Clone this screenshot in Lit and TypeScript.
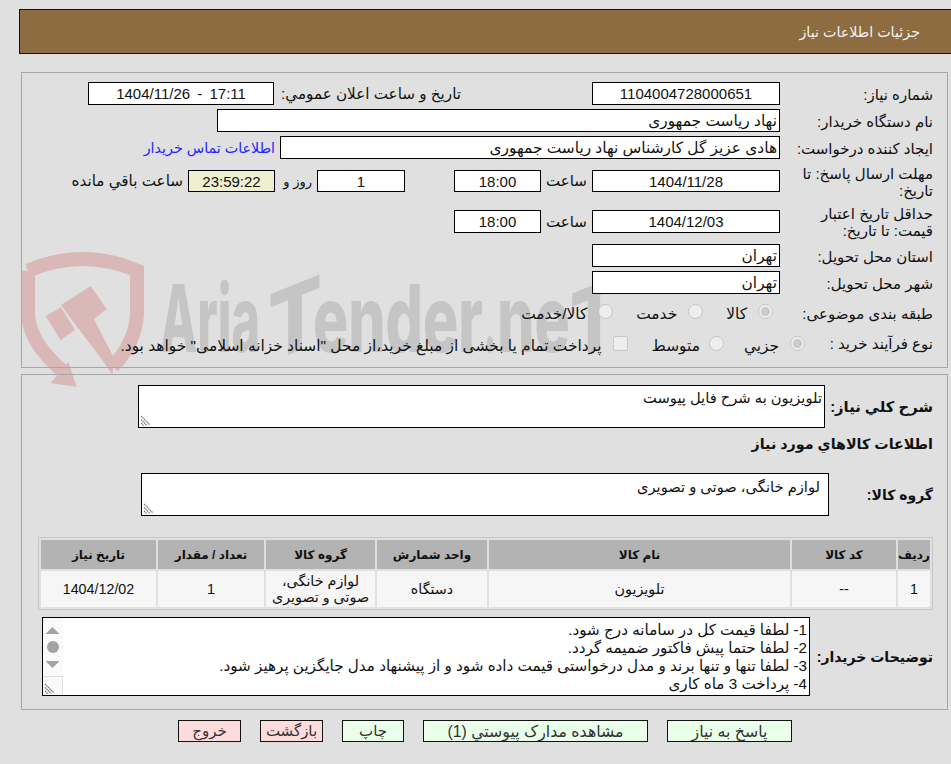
import { LitElement, html, css, svg } from "lit";
import { customElement } from "lit/decorators.js";

const handle = svg`<svg class="grip" width="11" height="11" viewBox="0 0 11 11"><path d="M1 1l9 9M1 4.500l6 6M1 8l3 3" stroke="#777" stroke-width="1.2" stroke-dasharray="1.5 .6" fill="none"/></svg>`;

@customElement("app-root")
export class AppRoot extends LitElement {
  static styles = css`
    :host { display: block; width: 100%; height: 764px; overflow: hidden; position: relative; background: #e0e0e0; color: #111; font-family: "Liberation Sans", "DejaVu Sans", sans-serif; font-size: 15px; }
    .mark { position: absolute; left: 0; top: 0; }
    .mark text { font-family: Inter, sans-serif; font-weight: 800; font-size: 93px; fill: #c5c5c5; }
    .page { position: relative; display: flex; flex-direction: column; padding-top: 9px; }
    .head { margin-left: 19px; background: #8c6c40; border: 1px solid #111; border-right: 0; color: #f2f2f2; display: flex; align-items: center; padding-right: 31px; font-size: 14.3px; padding-top: 1px; box-sizing: content-box; height: 42px; }
    .panel { margin: 0 3px 0 21px; border: 1px solid #a6a6a6; padding: 9px 14px 0 0; display: flex; flex-direction: column; }
    .p1 { margin-top: 18px; height: 285px; box-sizing: content-box; gap: 4px; }
    .p2 { margin-top: 6px; height: 324px; padding-top: 10px; }
    .row { display: flex; align-items: center; min-height: 23px; }
    .lbl { width: 153px; flex: none; text-align: right; line-height: 17px; font-size: 15px; padding-top: 1px; box-sizing: border-box; }
    .f { box-sizing: border-box; height: 23px; border: 1px solid #000; background: #fff; display: flex; align-items: center; justify-content: center; flex: none; padding: 0 2px; white-space: nowrap; }
    .f.s { justify-content: flex-start; font-size: 15.4px; }
    .w188 { width: 188px; }
    .w186 { width: 186px; word-spacing: 3px; }
    .w563 { width: 563px; }
    .w500 { width: 500px; }
    .w87 { width: 87px; }
    .w88 { width: 88px; }
    .h22 { height: 22px; }
    .timer { background: #efefd2; }
    .sub { width: 51px; flex: none; text-align: center; }
    .pub { margin-right: 131px; margin-left: 7px; white-space: nowrap; font-size: 15.2px; }
    .link { color: #2424ff; margin-right: 5px; white-space: nowrap; text-decoration: none; font-size: 14.3px; }
    .sp49 { width: 49px; flex: none; }
    .day { width: 42px; box-sizing: border-box; flex: none; text-align: right; padding-right: 5px; font-size: 13px; }
    .rem { margin-right: 5px; white-space: nowrap; font-size: 15.2px; }
    .r4 { height: 36px; }
    .r5 { height: 37px; }
    .r8 { height: 26px; margin-bottom: 2px; }
    .r8 .lbl { padding-top: 4px; }
    .r9 { height: 26px; }
    .opts { display: flex; align-items: center; white-space: nowrap; font-size: 15.4px; }
    .opts input { margin: 0 0 0 11px; width: 15px; height: 15px; flex: none; }
    .opts span { padding-top: 5px; }
    .l120 { width: 120px; }
    .o8 { margin-right: 7px; }
    .o8 span { margin-left: 23px; }
    .o8 .last { margin-left: 11px; }
    .o9 { margin-right: 8px; }
    .o9 .first { margin-left: 20px; }
    .o9 .tight { margin-left: 9px; }
    .o9 .mid { margin-left: 24px; }
    .o9 .long { font-size: 15.45px; }
    .bl { font-weight: 700; font-size: 14px; text-align: right; flex: none; }
    .big { font-size: 14.8px; }
    .box { box-sizing: border-box; border: 1px solid #000; background: #fff; flex: none; position: relative; height: 43px; overflow: hidden; text-align: right; }
    .grip { position: absolute; left: 1px; bottom: 1px; }
    .b1 { width: 687px; padding: 3px 2px; line-height: 18px; font-size: 14.7px; }
    .b2 { width: 688px; padding: 4px 8px; line-height: 18px; font-size: 14.7px; }
    .title { font-weight: 700; font-size: 14.3px; height: 20px; margin: 6px 0 19px; display: flex; align-items: center; }
    .tbl { border-collapse: separate; border-spacing: 2px; table-layout: fixed; width: 895px; border: 1px solid #c8c8c8; margin: 21px 0 0 16px; align-self: flex-end; text-align: center; }
    th { background: #b3b3b3; height: 29px; padding: 0; font-size: 12px; font-weight: 700; }
    td { background: #f6f6f6; height: 36px; padding: 0; font-size: 14.3px; line-height: 16px; }
    .b3 { width: 768px; height: 79px; padding: 3px 2px; line-height: 18px; font-size: 15.2px; }
    .rr { margin-top: 7px; align-items: center; }
    .w116 { width: 123px; }
    .sb { position: absolute; left: 0; top: 0; width: 20px; height: 100%; background: #fafafa; }
    .acts { display: flex; gap: 19px; padding-right: 159px; margin-top: 10px; }
    .btn { box-sizing: border-box; height: 22px; border: 1px solid #111; background: #eaffea; display: flex; align-items: center; justify-content: center; color: #333; flex: none; white-space: nowrap; }
    .wide { font-size: 15.8px; }
    .red { background: #ffdcdc; }
  `;

  render() {
    return html`
      <svg class="mark" width="951" height="420" viewBox="0 0 951 420">
        <g transform="translate(0 240) scale(.3333)" fill="#dab8b8">
          <path d="M84 92Q250 22 411 92V225Q405 310 338 380M84 92V225Q90 310 190 395" fill="none" stroke="#dab8b8" stroke-width="42"/>
          <path d="M205 365L230 440 152 430zM137 228L183 202 225 270 182 300zM183 195L272 138 320 207 282 237 340 350 338 405 300 350 232 262z"/>
        </g>
        <text x="160" y="352" textLength="100" lengthAdjust="spacingAndGlyphs">Aria</text>
        <g transform="translate(295 352) skewY(-22)"><text x="-27" y="0" textLength="54" lengthAdjust="spacingAndGlyphs">T</text></g>
        <text x="313" y="352" textLength="170" lengthAdjust="spacingAndGlyphs">ender</text>
        <text x="484" y="352" textLength="12" lengthAdjust="spacingAndGlyphs">.</text>
        <text x="497" y="352" textLength="73" lengthAdjust="spacingAndGlyphs">ne</text>
        <g transform="translate(595 352) skewY(-22)"><text x="-25" y="0" textLength="48" lengthAdjust="spacingAndGlyphs">T</text></g>
      </svg>
      <div class="page" dir="rtl">
        <div class="head">جزئیات اطلاعات نیاز</div>

        <div class="panel p1">
          <div class="row">
            <div class="lbl">شماره نیاز:</div>
            <div class="f w188">1104004728000651</div>
            <div class="pub">تاریخ و ساعت اعلان عمومي:</div>
            <div class="f w186">17:11 - 1404/11/26</div>
          </div>
          <div class="row">
            <div class="lbl">نام دستگاه خریدار:</div>
            <div class="f w563 s">نهاد ریاست جمهوری</div>
          </div>
          <div class="row">
            <div class="lbl">ایجاد کننده درخواست:</div>
            <div class="f w500 s">هادی عزیز گل کارشناس نهاد ریاست جمهوری</div>
            <a class="link">اطلاعات تماس خریدار</a>
          </div>
          <div class="row r4">
            <div class="lbl">مهلت ارسال پاسخ: تا تاریخ:</div>
            <div class="f w188 h22">1404/11/28</div>
            <div class="sub">ساعت</div>
            <div class="f w87 h22">18:00</div>
            <div class="sp49"></div>
            <div class="f w88 h22">1</div>
            <div class="day">روز و</div>
            <div class="f w87 h22 timer">23:59:22</div>
            <div class="rem">ساعت باقي مانده</div>
          </div>
          <div class="row r5">
            <div class="lbl">حداقل تاریخ اعتبار<br />قیمت: تا تاریخ:</div>
            <div class="f w188">1404/12/03</div>
            <div class="sub">ساعت</div>
            <div class="f w87">18:00</div>
          </div>
          <div class="row">
            <div class="lbl">استان محل تحویل:</div>
            <div class="f w188 s">تهران</div>
          </div>
          <div class="row">
            <div class="lbl">شهر محل تحویل:</div>
            <div class="f w188 s">تهران</div>
          </div>
          <div class="row r8">
            <div class="lbl">طبقه بندی موضوعی:</div>
            <div class="opts o8">
              <input type="radio" disabled checked name="a" /><span>کالا</span>
              <input type="radio" disabled name="a" /><span>خدمت</span>
              <input class="last" type="radio" disabled name="a" /><span>کالا/خدمت</span>
            </div>
          </div>
          <div class="row r9">
            <div class="lbl l120">نوع فرآیند خرید :</div>
            <div class="opts o9">
              <input type="radio" disabled checked name="b" /><span class="first">جزیي</span>
              <input class="tight" type="radio" disabled name="b" /><span class="mid">متوسط</span>
              <input type="checkbox" disabled /><span class="long">پرداخت تمام یا بخشی از مبلغ خرید،از محل "اسناد خزانه اسلامی" خواهد بود.</span>
            </div>
          </div>
        </div>

        <div class="panel p2">
          <div class="row">
            <div class="bl big" style="width:108px">شرح كلي نياز:</div>
            <div class="box b1">تلویزیون به شرح فایل پیوست${handle}</div>
          </div>
          <div class="title">اطلاعات كالاهاي مورد نياز</div>
          <div class="row">
            <div class="bl" style="width:104px">گروه کالا:</div>
            <div class="box b2">لوازم خانگی، صوتی و تصویری${handle}</div>
          </div>
          <table class="tbl">
            <colgroup>
              <col style="width:32px" /><col style="width:104px" /><col style="width:301px" /><col style="width:110px" /><col style="width:109px" /><col style="width:106px" /><col style="width:115px" />
            </colgroup>
            <thead>
              <tr><th>ردیف</th><th>کد کالا</th><th>نام کالا</th><th>واحد شمارش</th><th>گروه کالا</th><th>تعداد / مقدار</th><th>تاریخ نیاز</th></tr>
            </thead>
            <tbody>
              <tr><td>1</td><td>--</td><td>تلویزیون</td><td>دستگاه</td><td>لوازم خانگی، صوتی و تصویری</td><td>1</td><td>1404/12/02</td></tr>
            </tbody>
          </table>
          <div class="row rr">
            <div class="bl w116">توضیحات خریدار:</div>
            <div class="box b3">
              <div>1- لطفا قیمت کل در سامانه درج شود.</div>
              <div>2- لطفا حتما پیش فاکتور ضمیمه گردد.</div>
              <div>3- لطفا تنها و تنها برند و مدل درخواستی قیمت داده شود و از پیشنهاد مدل جایگزین پرهیز شود.</div>
              <div>4- پرداخت 3 ماه کاری</div>
              <svg class="sb" width="20" height="77" viewBox="0 0 20 77">
                <path d="M10 8l7 7H3zM10 49l7-7H3z" fill="#a3a3a3" transform="translate(-.5 1)"/>
                <circle cx="10" cy="29" r="6" fill="#a3a3a3"/>
                <path d="M0 58.500H20M19.500 58.500V77" stroke="#ddd" fill="none"/>
              </svg>
              ${handle}
            </div>
          </div>
        </div>

        <div class="acts">
          <div class="btn wide" style="width:125px">پاسخ به نیاز</div>
          <div class="btn wide" style="width:225px">مشاهده مدارک پیوستي (1)</div>
          <div class="btn" style="width:62px">چاپ</div>
          <div class="btn red" style="width:63px">بازگشت</div>
          <div class="btn red" style="width:63px">خروج</div>
        </div>
      </div>
    `;
  }
}
